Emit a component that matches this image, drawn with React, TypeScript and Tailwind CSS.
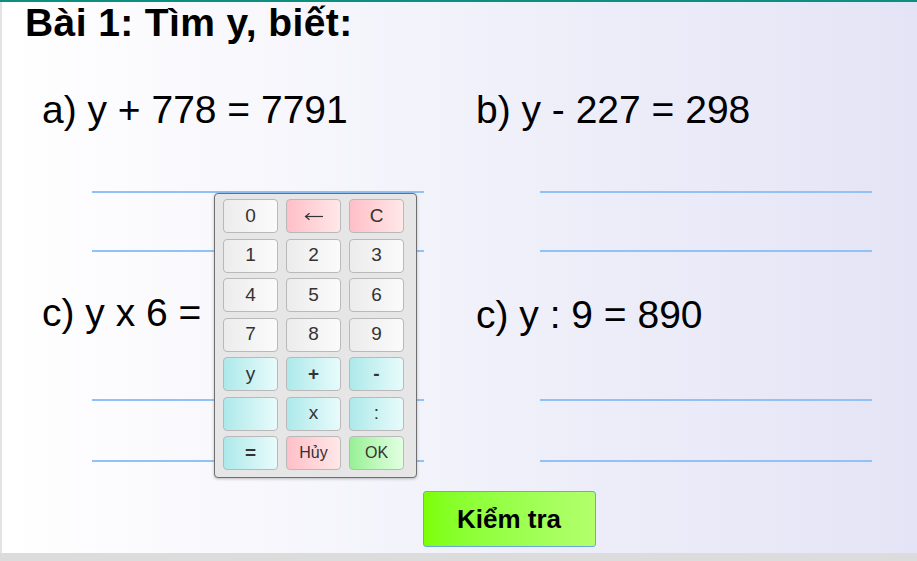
import * as React from "react";

type Key = { label: string; tone: "gray" | "red" | "cyan" | "green"; small?: boolean; bold?: boolean };

const tones: Record<Key["tone"], string> = {
  gray: "bg-gradient-to-r from-[#ececec] to-[#fbfbfb]",
  red: "bg-gradient-to-r from-[#ffbfc8] to-[#ffe8e8]",
  cyan: "bg-gradient-to-r from-[#ade9ea] to-[#e8fbfb]",
  green: "bg-gradient-to-r from-[#97f095] to-[#e2ffe2]",
};

const keys: Key[] = [
  { label: "0", tone: "gray" },
  { label: "←", tone: "red" },
  { label: "C", tone: "red" },
  { label: "1", tone: "gray" },
  { label: "2", tone: "gray" },
  { label: "3", tone: "gray" },
  { label: "4", tone: "gray" },
  { label: "5", tone: "gray" },
  { label: "6", tone: "gray" },
  { label: "7", tone: "gray" },
  { label: "8", tone: "gray" },
  { label: "9", tone: "gray" },
  { label: "y", tone: "cyan" },
  { label: "+", tone: "cyan", bold: true },
  { label: "-", tone: "cyan", bold: true },
  { label: "", tone: "cyan" },
  { label: "x", tone: "cyan" },
  { label: ":", tone: "cyan" },
  { label: "=", tone: "cyan", bold: true },
  { label: "Hủy", tone: "red", small: true },
  { label: "OK", tone: "green", small: true },
];

const BackArrow = () => (
  <svg width="20" height="9" viewBox="0 0 20 9" fill="none" stroke="#333" strokeWidth="1.2">
    <path d="M1.5 4.5H19" />
    <path d="M5.5 1.2L1.5 4.5L5.5 7.8" />
  </svg>
);

const Line = ({ className }: { className: string }) => (
  <div className={`h-[2px] bg-[#90c2f7] ${className}`} />
);

type ColumnProps = {
  top: string;
  bottom: string;
  eqX: string;
  lineX: string;
  bottomTop: string;
  lowerGap: string;
};

const Column: React.FC<ColumnProps> = ({ top, bottom, eqX, lineX, bottomTop, lowerGap }) => (
  <div className="flex flex-col">
    <div className={`h-[39px] text-[39px] leading-none whitespace-nowrap ${eqX}`}>{top}</div>
    <Line className={`mt-[62px] w-[332px] ${lineX}`} />
    <Line className={`mt-[57px] w-[332px] ${lineX}`} />
    <div className={`h-[39px] text-[39px] leading-none whitespace-nowrap ${eqX} ${bottomTop}`}>{bottom}</div>
    <Line className={`w-[332px] ${lineX} ${lowerGap}`} />
    <Line className={`mt-[59px] w-[332px] ${lineX}`} />
  </div>
);

export default function App() {
  return (
    <div
      className="relative w-[917px] h-[561px] overflow-hidden flex flex-col text-black"
      style={{ fontFamily: '"Liberation Sans", Arial, sans-serif' }}
    >
      <div className="h-[2px] bg-[#0b8f80]" />
      <div className="flex-1 flex flex-col border-l-2 border-[#e2e2e2] bg-gradient-to-r from-white to-[#e4e4f6]">
        <h1 className="ml-[23px] mt-[1px] h-[38px] text-[39px] font-bold leading-none tracking-[0.4px]">Bài 1: Tìm y, biết:</h1>

        <div className="mt-[49px] flex">
          <div className="w-[433px]">
            <Column
              top="a) y + 778 = 7791"
              bottom="c) y x 6 ="
              eqX="ml-[40px]"
              lineX="ml-[90px]"
              bottomTop="mt-[41px]"
              lowerGap="mt-[67px]"
            />
          </div>
          <div>
            <Column
              top="b) y - 227 = 298"
              bottom="c) y : 9 = 890"
              eqX="ml-[41px]"
              lineX="ml-[105px]"
              bottomTop="mt-[43px]"
              lowerGap="mt-[65px]"
            />
          </div>
        </div>

        <div className="mt-[29px] flex justify-center pl-[99px]">
          <button
            type="button"
            className="w-[173px] h-[56px] rounded-[3px] border border-[#6aa6e2] bg-gradient-to-r from-[#7dff00] to-[#b2ff6c] text-[26px] font-bold"
          >
            Kiểm tra
          </button>
        </div>
      </div>
      <div className="h-[8px] bg-[#dcdcdc]" />

      <div className="absolute left-[214px] top-[193px] w-[203px] h-[285px] rounded-[4px] border border-[#6f6f6f] bg-[#e6e6e6] shadow-[0_1px_3px_rgba(0,0,0,0.25)] pl-[8px] pt-[5px]">
        <div className="grid grid-cols-[55px_55px_55px] gap-x-[8px] gap-y-[5.5px]">
          {keys.map((k, i) => (
            <div
              key={i}
              className={`h-[34px] rounded-[4px] border border-[#b9b9b9] flex items-center justify-center text-[#333] ${tones[k.tone]} ${k.small ? "text-[16px]" : "text-[19px]"} ${k.bold ? "font-bold" : ""}`}
            >
              {k.label === "←" ? <BackArrow /> : k.label}
            </div>
          ))}
        </div>
      </div>
    </div>
  );
}
